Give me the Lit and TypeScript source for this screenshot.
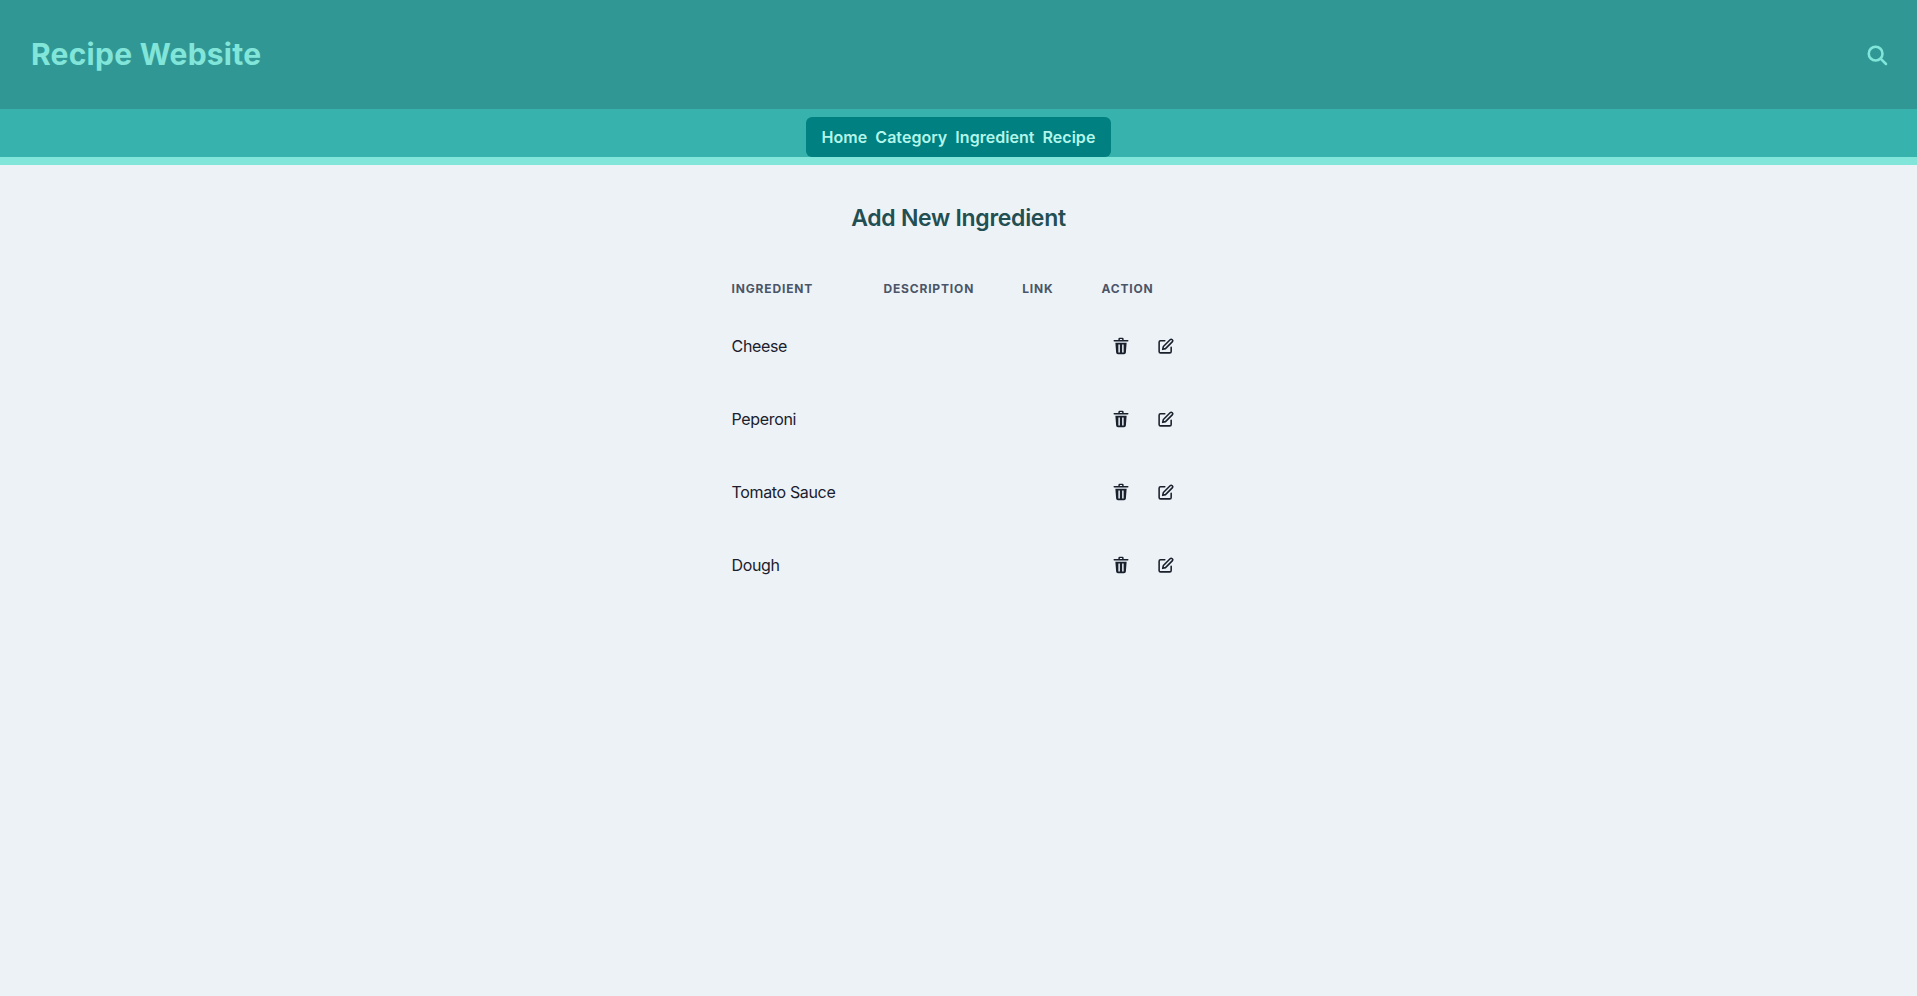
import { LitElement, html, css, svg } from 'lit';
import { customElement } from 'lit/decorators.js';

const INGREDIENTS = ['Cheese', 'Peperoni', 'Tomato Sauce', 'Dough'];
const NAV = ['Home', 'Category', 'Ingredient', 'Recipe'];

const searchIcon = svg`<circle cx="10.5" cy="10.5" r="7.5" fill="none" stroke="currentColor" stroke-width="2.8"/>
  <path d="M16.2 16.2 L21.8 21.8" fill="none" stroke="currentColor" stroke-width="2.8" stroke-linecap="round"/>`;

const trashIcon = svg`<path fill="currentColor" d="M8.500 2.500A1.500 1.500 0 0 1 10 1h4a1.500 1.500 0 0 1 1.500 1.500V4H21a1 1 0 1 1 0 2H3a1 1 0 0 1 0-2h5.500V2.500Zm2 .1V4h3V2.600h-3Z"/>
  <path fill="currentColor" fill-rule="evenodd" d="M4.500 7.500h15l-1 13.200A2.500 2.500 0 0 1 16 23H8a2.500 2.500 0 0 1-2.500-2.300L4.500 7.500ZM8.500 10v10.500h2V10h-2Zm5 0v10.500h2V10h-2Z"/>`;

const editIcon = svg`<path d="M11 4H5a2 2 0 0 0-2 2v13a2 2 0 0 0 2 2h13a2 2 0 0 0 2-2v-6" fill="none" stroke="currentColor" stroke-width="2.200" stroke-linecap="round" stroke-linejoin="round"/>
  <path d="M18.500 2.500a2.120 2.120 0 0 1 3 3L12 15l-4 1 1-4 9.500-9.500Z" fill="none" stroke="currentColor" stroke-width="2.200" stroke-linecap="round" stroke-linejoin="round"/>`;

@customElement('app-root')
export class AppRoot extends LitElement {
  static styles = css`
    :host {
      display: block;
      min-height: 996px;
      background: #edf2f7;
      color: #1a202c;
      font-family: 'Inter', 'Liberation Sans', sans-serif;
    }
    .top {
      height: 109px;
      display: flex;
      align-items: center;
      justify-content: space-between;
      padding: 0 30px 2px 31px;
      box-sizing: border-box;
      background: #319795;
      color: #81e6d9;
    }
    .brand {
      font-size: 30px;
      line-height: 36px;
      font-weight: 700;
      letter-spacing: 0.25px;
    }
    .search {
      display: block;
      width: 22px;
      height: 22px;
      margin: 2px -1px 0 0;
    }
    .nav-bar {
      height: 48px;
      display: flex;
      justify-content: center;
      align-items: flex-end;
      background: #38b2ac;
      border-bottom: 8px solid #81e6d9;
    }
    .nav {
      display: flex;
      gap: 8px;
      height: 40px;
      align-items: center;
      padding: 0 16px;
      border-radius: 6px;
      background: #008080;
      color: #b2f5ea;
      font-size: 16px;
      font-weight: 600;
      letter-spacing: 0.04px;
    }
    main {
      display: flex;
      flex-direction: column;
      align-items: center;
    }
    h2 {
      margin: 37px 0 0;
      font-size: 23px;
      line-height: 32px;
      font-weight: 600;
      letter-spacing: -0.3px;
      color: #234e52;
    }
    table {
      margin-top: 35px;
      border-collapse: collapse;
    }
    th {
      padding: 12px 24px;
      text-align: left;
      font-size: 12px;
      line-height: 16px;
      font-weight: 700;
      letter-spacing: 0.84px;
      text-transform: uppercase;
      color: #4a5568;
      border-bottom: 1px solid transparent;
    }
    td {
      padding: 16px 24px;
      font-size: 16px;
      line-height: 24px;
      letter-spacing: -0.35px;
      border-bottom: 1px solid transparent;
    }
    .actions {
      display: flex;
      gap: 4px;
    }
    .icon-btn {
      width: 40px;
      height: 40px;
      display: flex;
      align-items: center;
      justify-content: center;
      padding: 0;
      border: 0;
      background: none;
      color: #1a202c;
    }
    .icon-btn svg {
      display: block;
      width: 18px;
      height: 18px;
    }
    .icon-btn svg.edit {
      width: 17px;
      height: 17px;
      margin-left: 1px;
    }
  `;

  render() {
    return html`
      <header class="top">
        <div class="brand">Recipe Website</div>
        <svg class="search" viewBox="0 0 24 24">${searchIcon}</svg>
      </header>
      <div class="nav-bar">
        <nav class="nav">${NAV.map((n) => html`<span>${n}</span>`)}</nav>
      </div>
      <main>
        <h2>Add New Ingredient</h2>
        <table>
          <thead>
            <tr>
              <th>Ingredient</th>
              <th>Description</th>
              <th>Link</th>
              <th>Action</th>
            </tr>
          </thead>
          <tbody>
            ${INGREDIENTS.map(
              (name) => html`
                <tr>
                  <td>${name}</td>
                  <td></td>
                  <td></td>
                  <td>
                    <div class="actions">
                      <button class="icon-btn" aria-label="Delete"><svg viewBox="0 0 24 24">${trashIcon}</svg></button>
                      <button class="icon-btn" aria-label="Edit"><svg class="edit" viewBox="0 0 24 24">${editIcon}</svg></button>
                    </div>
                  </td>
                </tr>
              `,
            )}
          </tbody>
        </table>
      </main>
    `;
  }
}

declare global {
  interface HTMLElementTagNameMap {
    'app-root': AppRoot;
  }
}
